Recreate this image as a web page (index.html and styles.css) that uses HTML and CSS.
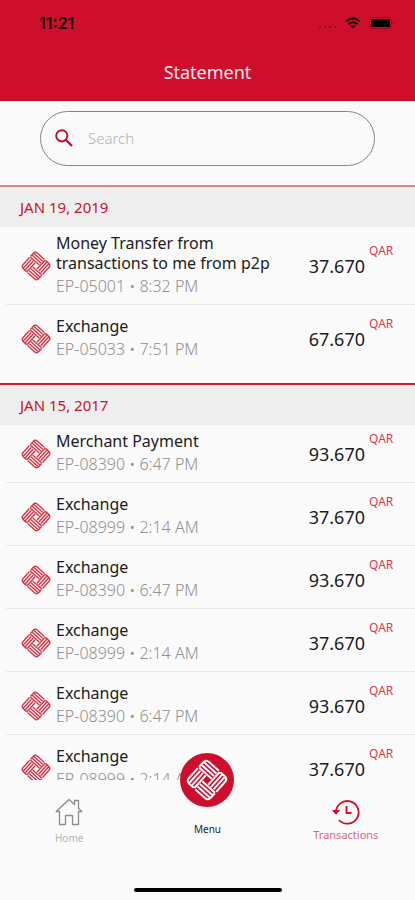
FILE: index.html
```
<!DOCTYPE html>
<html lang="en">
<head>
<meta charset="UTF-8">
<meta name="viewport" content="width=device-width,initial-scale=1">
<title>Statement</title>
<link rel="stylesheet" href="styles.css">
</head>
<body>
<svg class="defs" aria-hidden="true">
  <!-- one arm of the knot, turned four times -->
  <symbol id="knot" viewBox="-16 -16 32 32">
    <g fill="none" stroke="currentColor" stroke-width="1.5">
      <g id="arm" transform="rotate(42)"><path d="M2-11.200H-8Q-11.200-11.200-11.200-8V-3.500M2-8.500H-11M2-5.800H-11M2-3.100H-11"/></g>
      <use href="#arm" transform="rotate(90)"/>
      <use href="#arm" transform="rotate(180)"/>
      <use href="#arm" transform="rotate(270)"/>
    </g>
  </symbol>
</svg>

<header class="top">
  <div class="status">
    <span class="time">11:21</span>
    <span class="signal">
      <svg width="18" height="4" viewBox="0 0 18 4"><path d="M0 2h2M5 2h2M10 2h2M15 2h2" stroke="#960b22" stroke-width="2"/></svg>
      <svg width="16" height="12" viewBox="0 0 16 12"><g fill="none" stroke="#16050a" stroke-width="2"><path d="M1 4.5Q8-1.8 15 4.5"/><path d="M3.6 7.2Q8 3.4 12.4 7.2"/></g><path d="M5.6 9Q8 7 10.4 9L8 11.8Z" fill="#16050a"/></svg>
      <svg width="26" height="12" viewBox="0 0 26 12"><rect x=".5" y=".5" width="22" height="11" rx="3" fill="none" stroke="#960b22"/><rect x="2" y="2" width="19" height="8" rx="1" fill="#000"/><path d="M24 4q2 2 0 4z" fill="#7d0a1c"/></svg>
    </span>
  </div>
  <h1>Statement</h1>
</header>

<main>
  <label class="search">
    <svg width="18" height="18" viewBox="0 0 18 18" fill="none" stroke="#c8102e" stroke-width="2"><circle cx="6.8" cy="6.8" r="5.6"/><path d="M11 11l6 6" stroke-width="2.4"/></svg>
    <input type="search" placeholder="Search" aria-label="Search">
  </label>

  <section class="group first">
    <h2>JAN 19, 2019</h2>
    <ul>
      <li class="long"><svg class="logo"><use href="#knot"/></svg><div class="info"><h3>Money Transfer from transactions to me from p2p</h3><p>EP-05001 • 8:32 PM</p></div><span class="amount">37.670</span><span class="cur">QAR</span></li>
      <li><svg class="logo"><use href="#knot"/></svg><div class="info"><h3>Exchange</h3><p>EP-05033 • 7:51 PM</p></div><span class="amount">67.670</span><span class="cur">QAR</span></li>
    </ul>
  </section>

  <section class="group">
    <h2>JAN 15, 2017</h2>
    <ul>
      <li><svg class="logo"><use href="#knot"/></svg><div class="info"><h3>Merchant Payment</h3><p>EP-08390 • 6:47 PM</p></div><span class="amount">93.670</span><span class="cur">QAR</span></li>
      <li><svg class="logo"><use href="#knot"/></svg><div class="info"><h3>Exchange</h3><p>EP-08999 • 2:14 AM</p></div><span class="amount">37.670</span><span class="cur">QAR</span></li>
      <li><svg class="logo"><use href="#knot"/></svg><div class="info"><h3>Exchange</h3><p>EP-08390 • 6:47 PM</p></div><span class="amount">93.670</span><span class="cur">QAR</span></li>
      <li><svg class="logo"><use href="#knot"/></svg><div class="info"><h3>Exchange</h3><p>EP-08999 • 2:14 AM</p></div><span class="amount">37.670</span><span class="cur">QAR</span></li>
      <li><svg class="logo"><use href="#knot"/></svg><div class="info"><h3>Exchange</h3><p>EP-08390 • 6:47 PM</p></div><span class="amount">93.670</span><span class="cur">QAR</span></li>
      <li><svg class="logo"><use href="#knot"/></svg><div class="info"><h3>Exchange</h3><p>EP-08999 • 2:14 AM</p></div><span class="amount">37.670</span><span class="cur">QAR</span></li>
    </ul>
  </section>
</main>

<nav>
  <a href="#home" class="tab home">
    <svg width="28" height="28" viewBox="0 0 28 28" fill="none" stroke="#8c8c8c" stroke-width="1.3" stroke-linejoin="round"><path d="M4.500 13.500H1.200L14 1.500 19.500 6.500V2.500H23.500V10.300L26.800 13.500H23.500V26.500H17.500V17.500H10.500V26.500H4.500Z"/></svg>
    <span>Home</span>
  </a>
  <a href="#menu" class="tab menu">
    <span class="disc"><svg width="42" height="42"><use href="#knot"/></svg></span>
    <span>Menu</span>
  </a>
  <a href="#transactions" class="tab trans">
    <svg width="28" height="26" viewBox="0 0 28 26" fill="none" stroke="#cd0f2c" stroke-width="1.8"><path d="M4 13.500A11.300 11.300 0 1 1 7 21"/><path d="M.8 11.500L4 15.200 7.500 11.500Z" fill="#cd0f2c" stroke-width="1"/><path d="M14.500 7V14H19.500"/></svg>
    <span>Transactions</span>
  </a>
</nav>
</body>
</html>
```
FILE: styles.css
```
:root{--red:#cd0f2c;--bg:#fafafa;--txt:#1c1c1c;--sub:#909090}
*{box-sizing:border-box;margin:0;padding:0}
body{height:100vh;display:flex;flex-direction:column;overflow:hidden;background:var(--bg);color:var(--txt);
  font-family:"Noto Sans","Open Sans",sans-serif}
.defs{position:absolute;width:0;height:0}

.top{flex:none;height:101px;background:var(--red);border-bottom:1px solid #c40818}
.status{display:flex;justify-content:space-between;align-items:center;height:46px;padding:0 20px 0 39px}
.time{font:600 16px/20px Inter,sans-serif;color:#16050a}
.signal{display:flex;align-items:center;gap:8px}
.signal svg:first-child{margin-top:8px}
h1{font-size:18px;font-weight:400;line-height:52px;text-align:center;color:#ffe9ea}

main{flex:1;min-height:0;overflow:hidden}
.search{display:flex;align-items:center;gap:15px;height:55px;margin:10px 40px 19px;padding:0 14px 2px;
  border:1px solid #858585;border-radius:28px}
.search input{flex:1;min-width:0;border:0;outline:0;background:none;font:300 15px "Noto Sans",sans-serif;color:var(--txt)}
.search input::placeholder{color:#b0b0b0;opacity:1}

.group{border-top:2px solid #cf1f2a;margin-bottom:16px}
.group.first{border-color:#d98489}
h2{height:40px;padding-left:20px;background:#eee;color:#c8142a;font-size:15px;font-weight:400;line-height:40px}
ul{list-style:none;margin-left:6px}
li{display:flex;align-items:center;padding:11px 21px 6px 15px;border-bottom:1px solid #e8e8e8}
li:first-child{padding-top:6px}
.group.first li:last-child{border:0}
.logo{flex:none;width:30px;height:30px;margin-right:5px;color:#d93445}
.info{flex:1;padding-right:20px}
h3{font-size:16px;font-weight:400;line-height:20px}
li p{padding-top:1px;font-size:16px;font-weight:300;line-height:24px;color:var(--sub)}
.amount{font-size:18px;line-height:24px}
.cur{align-self:flex-start;width:29px;padding-left:4px;font-size:12px;line-height:16px;color:#d63a4e}
.long .cur{margin-top:10px}

nav{flex:none;position:relative;display:grid;grid-template-columns:repeat(3,1fr);height:120px;background:var(--bg)}
nav::after{content:"";position:absolute;left:50%;bottom:8px;width:148px;height:4px;margin-left:-74px;border-radius:2px;background:#000}
.tab{display:flex;flex-direction:column;align-items:center;text-decoration:none;font-size:10px;line-height:16px}
.home{padding-top:18px;color:#b5b5b5}
.home span{margin-top:4px}
.menu{color:#222}
.disc{display:flex;align-items:center;justify-content:center;width:54px;height:54px;margin:-27px 0 14px;
  border-radius:50%;background:var(--red);color:#fff}
.trans{padding-top:19px;font-size:11px;color:#d9667a}
.trans span{margin-top:2px}
```
